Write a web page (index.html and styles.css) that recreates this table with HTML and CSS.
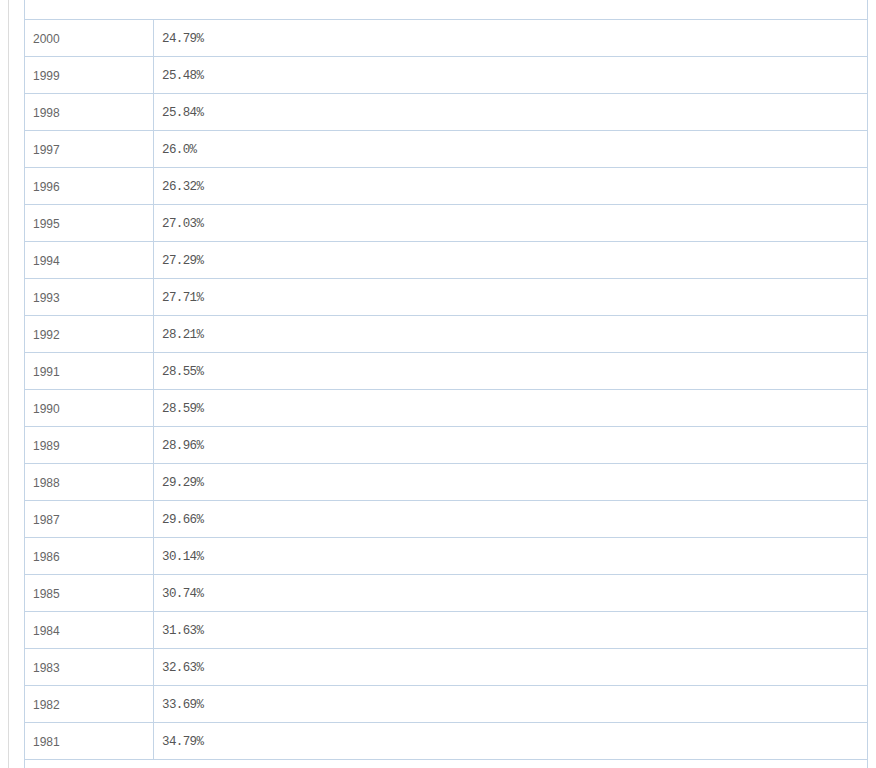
FILE: index.html
```html
<!DOCTYPE html>
<html>
<head>
<meta charset="utf-8">
<link rel="stylesheet" href="styles.css">
</head>
<body>
<div class="wrap">
<table class="data">
<colgroup><col class="c-yr"><col class="c-val"></colgroup>
<tr class="edge"><td colspan="2"></td></tr>
<tr><td class="yr">2000</td><td class="val">24.79%</td></tr>
<tr><td class="yr">1999</td><td class="val">25.48%</td></tr>
<tr><td class="yr">1998</td><td class="val">25.84%</td></tr>
<tr><td class="yr">1997</td><td class="val">26.0%</td></tr>
<tr><td class="yr">1996</td><td class="val">26.32%</td></tr>
<tr><td class="yr">1995</td><td class="val">27.03%</td></tr>
<tr><td class="yr">1994</td><td class="val">27.29%</td></tr>
<tr><td class="yr">1993</td><td class="val">27.71%</td></tr>
<tr><td class="yr">1992</td><td class="val">28.21%</td></tr>
<tr><td class="yr">1991</td><td class="val">28.55%</td></tr>
<tr><td class="yr">1990</td><td class="val">28.59%</td></tr>
<tr><td class="yr">1989</td><td class="val">28.96%</td></tr>
<tr><td class="yr">1988</td><td class="val">29.29%</td></tr>
<tr><td class="yr">1987</td><td class="val">29.66%</td></tr>
<tr><td class="yr">1986</td><td class="val">30.14%</td></tr>
<tr><td class="yr">1985</td><td class="val">30.74%</td></tr>
<tr><td class="yr">1984</td><td class="val">31.63%</td></tr>
<tr><td class="yr">1983</td><td class="val">32.63%</td></tr>
<tr><td class="yr">1982</td><td class="val">33.69%</td></tr>
<tr><td class="yr">1981</td><td class="val">34.79%</td></tr>
<tr class="edge"><td colspan="2"></td></tr>
</table>
</div>
</body>
</html>
```
FILE: styles.css
```css
html, body {
  margin: 0;
  padding: 0;
  background: #fff;
  overflow: hidden;
}
.wrap {
  margin: 0 8px 0 8px;
  border-left: 1px solid #dcdcdc;
  padding-left: 15px;
  height: 768px;
  overflow: hidden;
}
.data {
  width: 100%;
  border-collapse: collapse;
  margin-top: -18px;
  table-layout: fixed;
}
.c-yr {
  width: 129px;
}
.data td {
  border: 1px solid #c3d4e6;
  padding: 0 0 0 8px;
  box-sizing: border-box;
  height: 37px;
}
.data td.yr {
  font-family: "Liberation Sans", Arial, sans-serif;
  font-size: 12px;
  color: #666;
  padding-top: 1px;
}
.data td.val {
  font-family: "Liberation Mono", monospace;
  font-size: 12.5px;
  letter-spacing: -0.6px;
  color: #555;
  padding-top: 1px;
}
```
